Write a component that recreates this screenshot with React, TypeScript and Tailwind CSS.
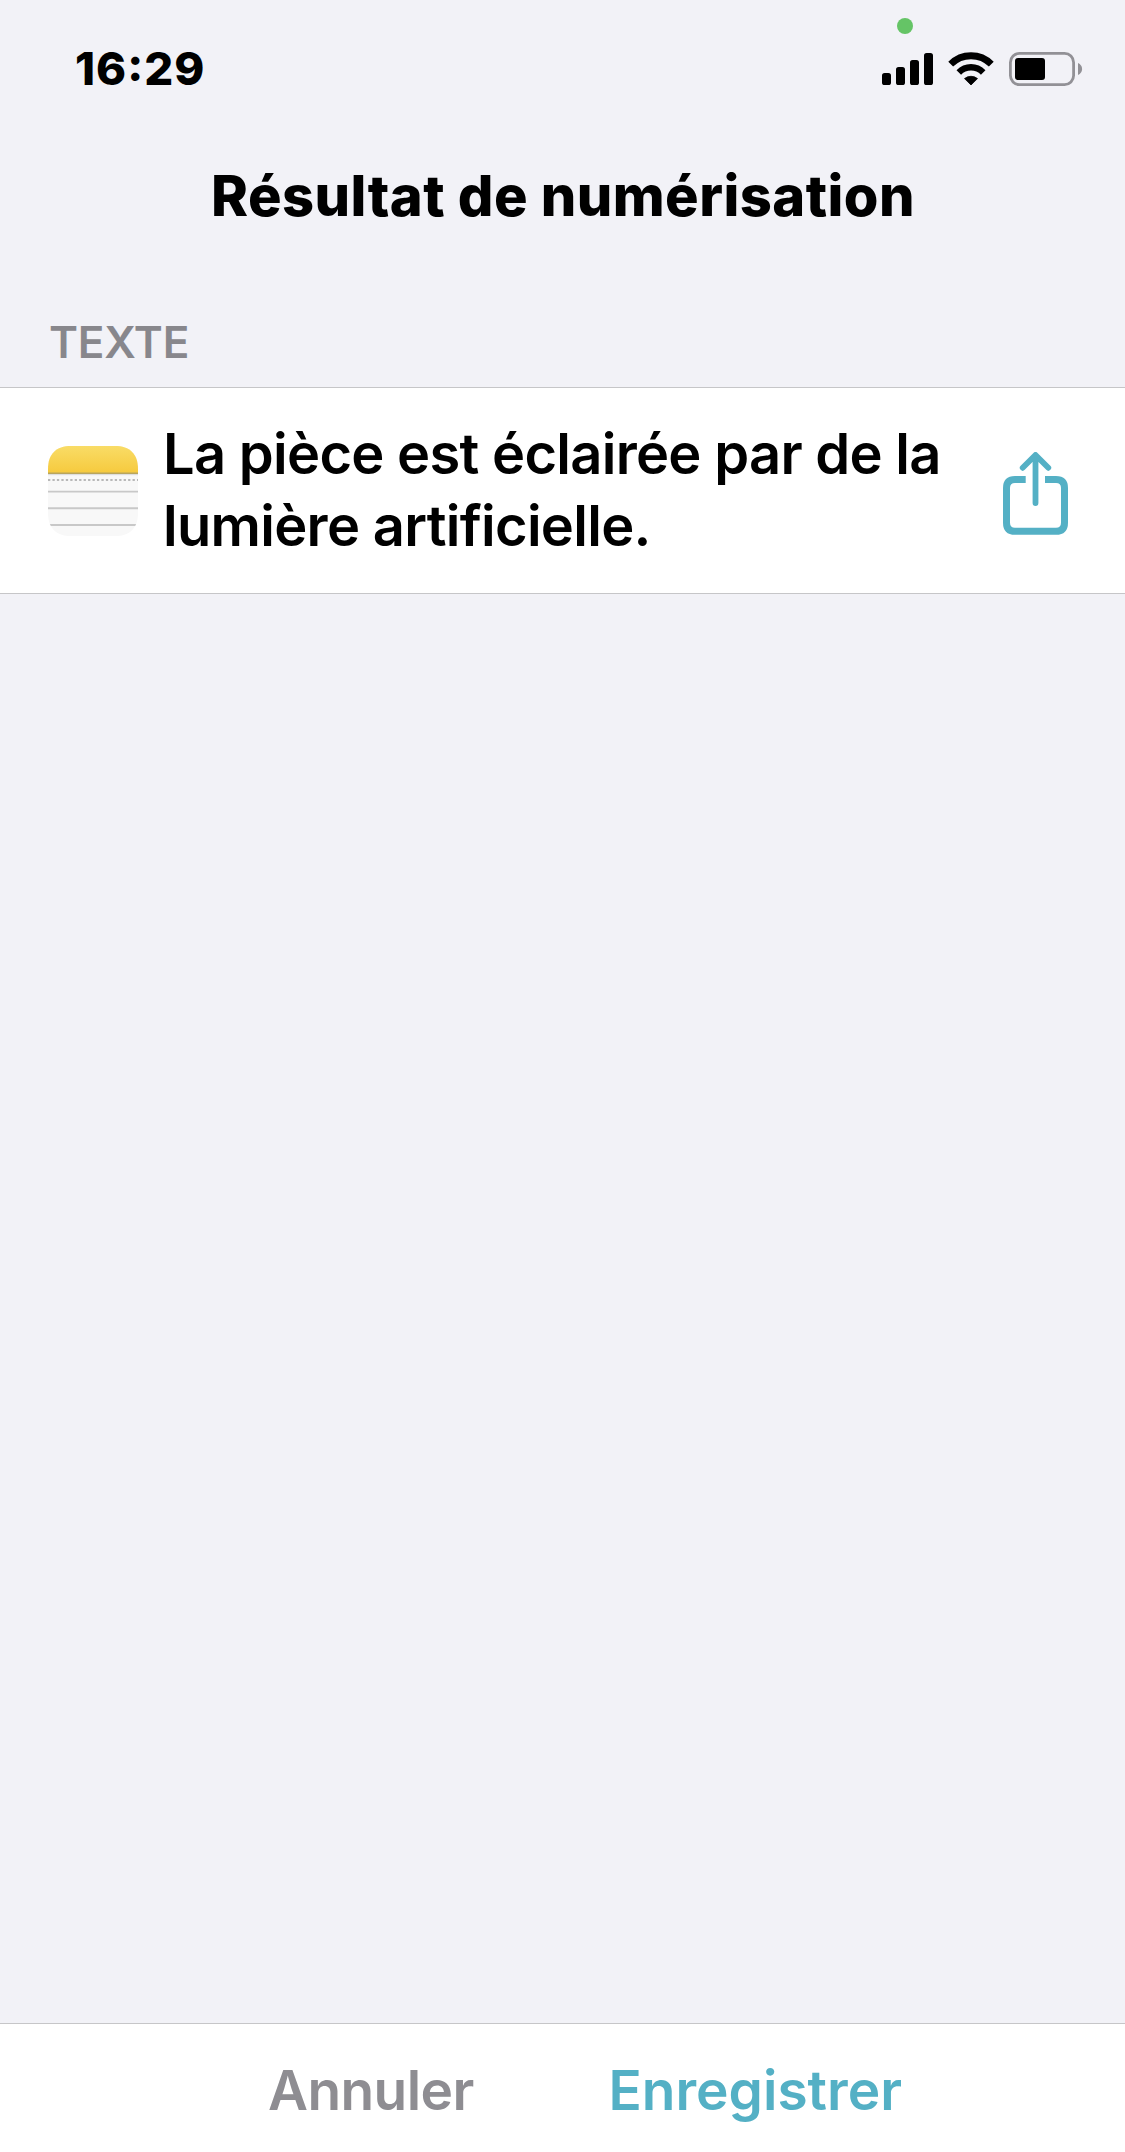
function Signal() {
  return (
    <svg width="51" height="32" viewBox="0 0 51 32" fill="#000">
      <rect x="0" y="20" width="9" height="12" rx="2.6" />
      <rect x="14" y="14" width="9" height="18" rx="2.6" />
      <rect x="28" y="7" width="9" height="25" rx="2.6" />
      <rect x="42" y="0" width="9" height="32" rx="2.6" />
    </svg>
  );
}

function Wifi() {
  return (
    <svg width="46" height="34" viewBox="0 0 46 34" fill="none">
      <path d="M2.7 12.2A28.6 28.6 0 0 1 43.3 12.2" stroke="#000" strokeWidth="6.8" />
      <path d="M10.8 20.4A17.2 17.2 0 0 1 35.2 20.4" stroke="#000" strokeWidth="6.4" />
      <path d="M16.5 26.6A10.3 10.3 0 0 1 29.5 26.6L23 33Z" fill="#000" stroke="#000" strokeWidth="0.8" strokeLinejoin="round" />
    </svg>
  );
}

function Battery() {
  return (
    <svg width="74" height="34" viewBox="0 0 74 34" fill="none">
      <rect x="1.4" y="1.4" width="63.2" height="31.2" rx="9" stroke="#929196" strokeWidth="2.8" />
      <rect x="6" y="6" width="30" height="22" rx="3" fill="#000" />
      <path d="M69 11c2.6 1 4.1 3.4 4.1 6s-1.5 5-4.1 6z" fill="#929196" />
    </svg>
  );
}

function NotesIcon() {
  return (
    <svg width="90" height="90" viewBox="0 0 90 90" className="shrink-0">
      <defs>
        <linearGradient id="cover" x1="0" y1="0" x2="0" y2="1">
          <stop offset="0" stopColor="#f9dc66" />
          <stop offset="1" stopColor="#f6ca3e" />
        </linearGradient>
        <clipPath id="tile">
          <path d="M0 23C0 8 8 0 23 0H67C82 0 90 8 90 23V67C90 82 82 90 67 90H23C8 90 0 82 0 67Z" />
        </clipPath>
      </defs>
      <g clipPath="url(#tile)">
        <rect width="90" height="90" fill="#f8f8f8" />
        <rect width="90" height="27" fill="url(#cover)" />
        <rect y="26.5" width="90" height="1.5" fill="#b9a55c" />
        <rect y="28" width="90" height="1.2" fill="#dedede" />
        <path d="M0 34H90" stroke="#b8b8b8" strokeWidth="2.2" strokeDasharray="2.3 2.15" />
        <path d="M0 45.6H90M0 62.3H90M0 79H90" stroke="#c8c8c8" strokeWidth="1.9" />
      </g>
    </svg>
  );
}

function ShareIcon() {
  return (
    <svg width="65" height="83" viewBox="0 0 65 83" fill="none" stroke="#54b0c5">
      <path d="M22.7 27.6H12Q3.500 27.6 3.5 36.1V70.700Q3.5 79.3 12 79.3H53Q61.5 79.3 61.5 70.700V36.1Q61.5 27.6 53 27.6H42" strokeWidth="7" />
      <path d="M32.5 3.5V51M19.7 15.8L32.5 3L45.3 15.8" strokeWidth="5.8" strokeLinecap="round" strokeLinejoin="round" />
    </svg>
  );
}

export default function App() {
  return (
    <div className="flex h-[2152px] w-[1125px] flex-col overflow-hidden bg-[#f2f2f7] font-[Inter,sans-serif] text-black">
      <header className="relative flex h-[137px] shrink-0 justify-between pl-[75px] pr-[42px]">
        <span className="mt-[49px] text-[45.5px] leading-[40px] font-extrabold tracking-[1px]">
          16<span className="relative -top-1">:</span>29
        </span>
        <span className="absolute top-[18px] left-[897px] size-4 rounded-full bg-[#65c466]" />
        <div className="mt-[52px] flex h-[34px] items-start">
          <div className="pt-px"><Signal /></div>
          <div className="ml-[15px]"><Wifi /></div>
          <div className="ml-[15px]"><Battery /></div>
        </div>
      </header>
      <h1 className="mt-[29px] pl-[211px] text-[56px] leading-[60px] font-extrabold tracking-[0.45px] whitespace-nowrap">
        Résultat de numérisation
      </h1>
      <h2 className="mt-[96px] pl-[49px] text-[44px] leading-[40px] font-semibold tracking-[-0.25px] text-[#88878c]">TEXTE</h2>
      <section className="mt-[25px] flex h-[207px] shrink-0 items-start border-y border-[#c6c6c8] bg-white pl-[48px]">
        <div className="mt-[58px]"><NotesIcon /></div>
        <p className="mt-[30px] ml-[25px] w-[840px] text-[56px] leading-[72px] font-semibold tracking-[-0.71px] whitespace-nowrap">
          La pièce est éclairée par de la
          <br />
          lumière artificielle.
        </p>
        <button className="mt-[64px]" aria-label="Partager"><ShareIcon /></button>
      </section>
      <footer className="mt-auto flex h-[129px] shrink-0 items-start border-t border-[#c6c6c8] bg-white pt-[36px] pl-[268px] text-[55px] leading-[60px]">
        <button className="w-[340.5px] text-left font-semibold tracking-[-0.57px] text-[#8e8d92]">Annuler</button>
        <button className="text-left font-semibold text-[#54b0c5]">Enregistrer</button>
      </footer>
    </div>
  );
}
